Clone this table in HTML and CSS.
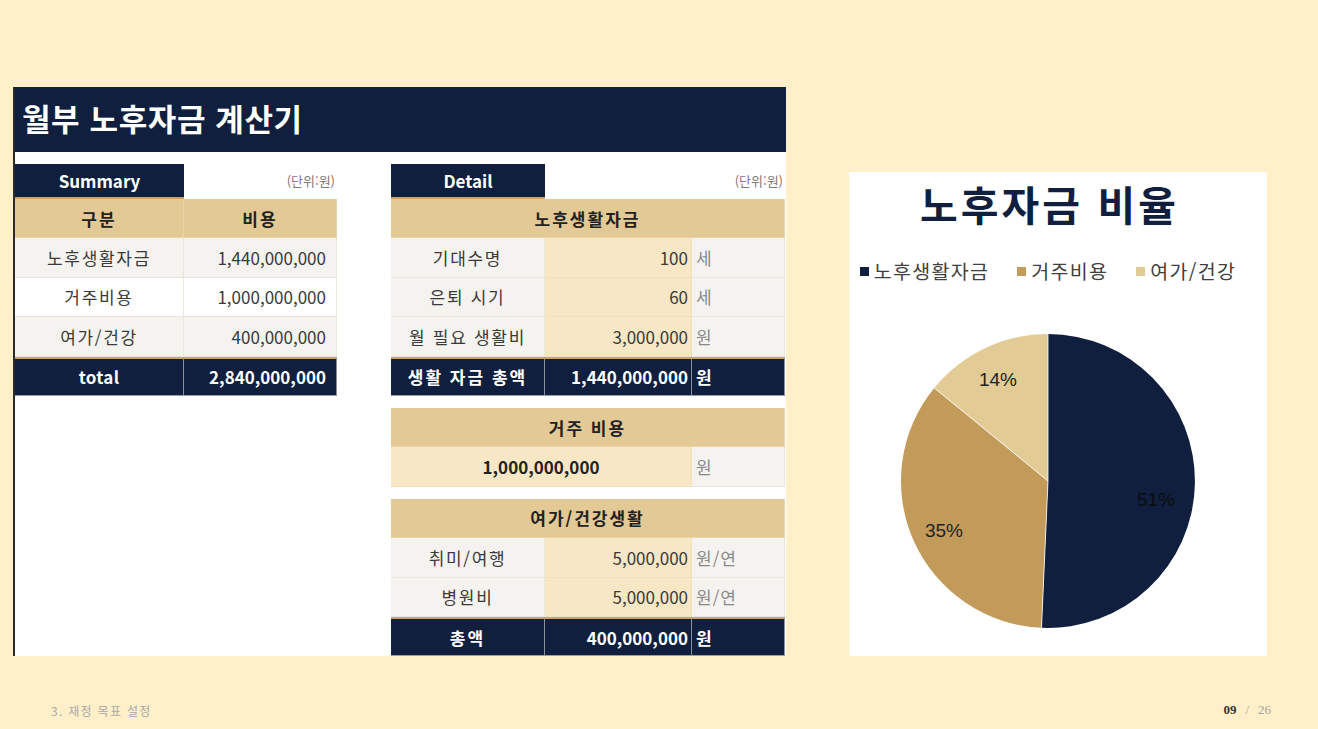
FILE: index.html
```html
<!DOCTYPE html>
<html lang="ko">
<head>
<meta charset="utf-8">
<title>월부 노후자금 계산기</title>
<link rel="stylesheet" href="styles.css">
</head>
<body>
<div class="slide">
  <div class="content">
    <section class="calc">
      <h1 class="calc-title">월부 노후자금 계산기</h1>
      <div class="calc-body">
        <div class="summary">
          <div class="cap-row">
            <div class="cap">Summary</div>
            <div class="unit-note">(단위:원)</div>
          </div>
          <div class="s-grid">
            <div class="c head">구분</div>
            <div class="c head">비용</div>
            <div class="c lbl">노후생활자금</div>
            <div class="c num">1,440,000,000</div>
            <div class="c lbl white">거주비용</div>
            <div class="c num white">1,000,000,000</div>
            <div class="c lbl">여가/건강</div>
            <div class="c num">400,000,000</div>
            <div class="c tot tot-latin">total</div>
            <div class="c tot num-tot">2,840,000,000</div>
          </div>
        </div>

        <div class="detail">
          <div class="cap-row d-cap">
            <div class="cap">Detail</div>
            <div class="unit-note">(단위:원)</div>
          </div>
          <div class="d-grid">
            <div class="c head span3">노후생활자금</div>
            <div class="c lbl">기대수명</div>
            <div class="c val">100</div>
            <div class="c unit">세</div>
            <div class="c lbl">은퇴 시기</div>
            <div class="c val">60</div>
            <div class="c unit">세</div>
            <div class="c lbl">월 필요 생활비</div>
            <div class="c val">3,000,000</div>
            <div class="c unit">원</div>
            <div class="c tot">생활 자금 총액</div>
            <div class="c tot num-tot">1,440,000,000</div>
            <div class="c tot unit-tot">원</div>
          </div>
          <div class="d-grid group">
            <div class="c head span3">거주 비용</div>
            <div class="c val-wide span2">1,000,000,000</div>
            <div class="c unit">원</div>
          </div>
          <div class="d-grid group">
            <div class="c head span3">여가/건강생활</div>
            <div class="c lbl">취미/여행</div>
            <div class="c val">5,000,000</div>
            <div class="c unit">원/연</div>
            <div class="c lbl">병원비</div>
            <div class="c val">5,000,000</div>
            <div class="c unit">원/연</div>
            <div class="c tot">총액</div>
            <div class="c tot num-tot">400,000,000</div>
            <div class="c tot unit-tot">원</div>
          </div>
        </div>
      </div>
    </section>

    <section class="chart">
      <h2 class="chart-title">노후자금 비율</h2>
      <ul class="legend">
        <li><span class="sw sw-navy"></span>노후생활자금</li>
        <li><span class="sw sw-gold"></span>거주비용</li>
        <li><span class="sw sw-light"></span>여가/건강</li>
      </ul>
      <svg class="pie" width="300" height="300" viewBox="-150 -150 300 300">
        <path d="M0,0 L0,-147 A147,147 0 1 1 -6.50,146.86 Z" fill="#0f1f3d"/>
        <path d="M0,0 L-6.50,146.86 A147,147 0 0 1 -113.77,-93.11 Z" fill="#c29b5b"/>
        <path d="M0,0 L-113.77,-93.11 A147,147 0 0 1 0,-147 Z" fill="#e3cb96"/>
        <line x1="0" y1="0" x2="0" y2="-147" stroke="#ffffff" stroke-width="0.8"/>
        <line x1="0" y1="0" x2="-6.5" y2="146.86" stroke="#ffffff" stroke-width="0.8"/>
        <line x1="0" y1="0" x2="-113.77" y2="-93.11" stroke="#ffffff" stroke-width="0.8"/>
        <text x="-50" y="-102" class="pl">14%</text>
        <text x="-104" y="49" class="pl">35%</text>
        <text x="108" y="18" class="pl pl-dark">51%</text>
      </svg>
    </section>
  </div>

  <footer class="footer">
    <span class="chapter">3. 재정 목표 설정</span>
    <span class="pager"><b class="cur">09</b><span class="sep">/</span><span class="total">26</span></span>
  </footer>
</div>
</body>
</html>
```

FILE: styles.css
```css
* { box-sizing: border-box; }

html, body {
  margin: 0;
  padding: 0;
}

body {
  background: #fff0c9;
  font-family: "Noto Sans CJK KR", "Noto Sans", sans-serif;
  color: #3a3a3a;
}

.slide {
  width: 1318px;
  height: 729px;
  background: #fff0c9;
  display: flex;
  flex-direction: column;
  overflow: hidden;
}

.content {
  display: flex;
  align-items: flex-end;
  gap: 63px;
  padding: 87px 0 0 13px;
}

/* ---------- calculator panel ---------- */
.calc {
  width: 773px;
  height: 569px;
  background: #ffffff;
  border-left: 2px solid #2b2b2b;
}

.calc-title {
  margin: 0;
  height: 65px;
  background: #0f1f3d;
  color: #ffffff;
  font-size: 31px;
  font-weight: 700;
  line-height: 62px;
  padding-left: 7px;
  letter-spacing: 0.6px;
}

.calc-body {
  display: flex;
  gap: 54px;
  padding-top: 12px;
}

.summary { width: 322px; }
.detail { width: 394px; }

.cap-row {
  display: flex;
  align-items: center;
  height: 35px;
}

.cap {
  width: 169px;
  height: 35px;
  background: #0f1f3d;
  color: #ffffff;
  font-weight: 700;
  font-size: 17px;
  display: flex;
  align-items: center;
  justify-content: center;
  border-bottom: 2px solid #c8a36b;
  align-self: flex-start;
}

.d-cap .cap { width: 154px; }

.unit-note {
  flex: 1;
  text-align: right;
  font-size: 13px;
  color: #7a7a7a;
  padding-right: 2px;
  align-self: flex-start;
  line-height: 34px;
}

.s-grid {
  display: grid;
  grid-template-columns: 169px 153px;
  grid-auto-rows: 39.4px;
}

.d-grid {
  display: grid;
  grid-template-columns: 154px 147px 93px;
  grid-auto-rows: 39.4px;
}

.d-grid.group { margin-top: 12px; }

.c {
  display: flex;
  align-items: center;
  font-size: 17px;
  border-right: 1px solid #ebe6dc;
  border-bottom: 1px solid #ebe6dc;
  background: #f5f3ef;
  color: #3a3a3a;
  white-space: nowrap;
}

.head {
  background: #e2c995;
  color: #222;
  font-weight: 700;
  justify-content: center;
  border-color: #e8d4a8;
  letter-spacing: 2px;
}

.span3 { grid-column: span 3; }
.span2 { grid-column: span 2; }

.lbl {
  justify-content: center;
  letter-spacing: 1.7px;
}

.num {
  justify-content: flex-end;
  padding-right: 10px;
}

.white { background: #ffffff; }

.val {
  background: #f7e7c5;
  justify-content: flex-end;
  padding-right: 3px;
  border-color: #f2e0bb;
}

.val-wide {
  background: #f7e7c5;
  justify-content: center;
  font-weight: 700;
  color: #222;
  border-color: #f2e0bb;
}

.unit {
  color: #8a8a8a;
  padding-left: 4px;
  letter-spacing: 1px;
}

.tot {
  background: #0f1f3d;
  color: #ffffff;
  font-weight: 700;
  justify-content: center;
  border-top: 2px solid #c8a36b;
  border-right: 1px solid #8a909c;
  border-bottom: 1px solid #9aa0aa;
  letter-spacing: 2px;
}

.tot-latin { letter-spacing: 0.3px; }

.num-tot {
  justify-content: flex-end;
  padding-right: 3px;
  letter-spacing: 0;
}

.s-grid .num-tot { padding-right: 10px; }

.unit-tot {
  justify-content: flex-start;
  padding-left: 4px;
}

/* ---------- chart panel ---------- */
.chart {
  width: 418px;
  height: 484px;
  background: #ffffff;
  padding: 5px 20px 0 0;
  display: flex;
  flex-direction: column;
  align-items: center;
}

.chart-title {
  margin: 0;
  font-size: 41px;
  line-height: 52px;
  font-weight: 700;
  color: #0f1f3d;
  letter-spacing: 3px;
  padding-left: 3px;
}

.legend {
  list-style: none;
  margin: 29px 0 0 0;
  padding: 0;
  display: flex;
  gap: 28px;
  font-size: 19.5px;
  line-height: 26px;
  color: #404040;
  letter-spacing: 1.3px;
}

.legend li {
  display: flex;
  align-items: center;
}

.sw {
  width: 9px;
  height: 9px;
  margin-right: 5px;
}

.sw-navy { background: #0f1f3d; }
.sw-gold { background: #c29b5b; }
.sw-light { background: #e3cb96; }

.pie {
  display: block;
  margin-top: 47px;
}

.pl {
  font-family: "Liberation Sans", Arial, sans-serif;
  font-size: 19px;
  fill: #222222;
  text-anchor: middle;
  dominant-baseline: central;
}

.pl-dark { fill: #0a0d14; }

/* ---------- footer ---------- */
.footer {
  display: flex;
  justify-content: space-between;
  align-items: center;
  margin-top: 46px;
  padding: 0 47px 0 51px;
  height: 16px;
}

.chapter {
  font-size: 12px;
  color: #a8a8a8;
  letter-spacing: 1.3px;
}

.pager {
  font-family: "Liberation Serif", serif;
  font-size: 13px;
  color: #a0a0a0;
}

.cur {
  color: #333333;
  font-weight: 700;
}

.sep {
  margin: 0 9px;
}
```
